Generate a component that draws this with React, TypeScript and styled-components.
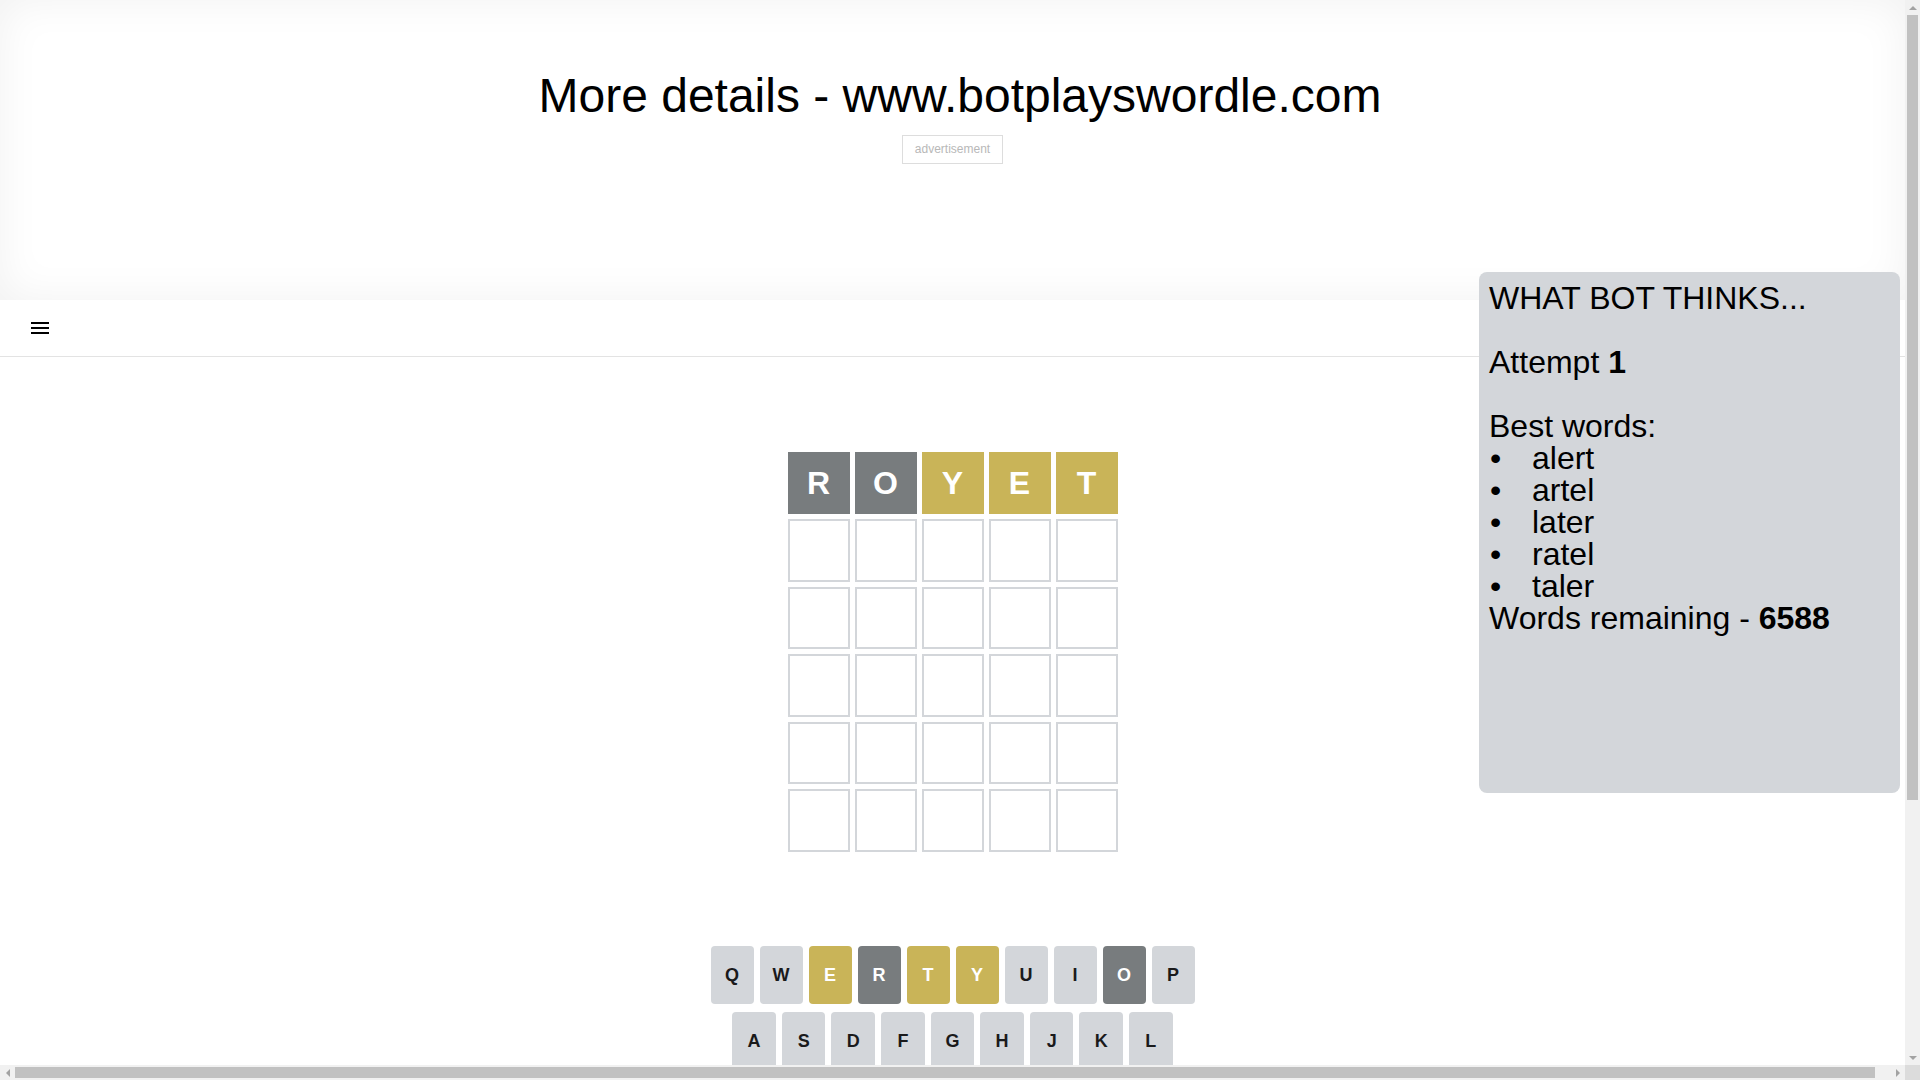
import React from "react";
import styled, { createGlobalStyle, css } from "styled-components";

type TileState = "empty" | "absent" | "present" | "correct";
type KeyState = "idle" | "absent" | "present" | "correct";
type ArrowDir = "up" | "down" | "left" | "right";

const palette = {
  light: "#d3d6da",
  absent: "#787c7e",
  present: "#c9b458",
  correct: "#6aaa64",
};

const GlobalStyle = createGlobalStyle`
  html, body {
    margin: 0;
    padding: 0;
    overflow: hidden;
  }
  body {
    font-family: "Liberation Sans", Arial, sans-serif;
    background: #ffffff;
    color: #000000;
  }
  *, *::before, *::after {
    box-sizing: border-box;
  }
`;

/* ---------- window frame with classic scrollbars ---------- */

const Viewport = styled.div`
  width: 100vw;
  height: 100vh;
  display: grid;
  grid-template-columns: 1fr 15px;
  grid-template-rows: 1fr 15px;
  overflow: hidden;
`;

const Scroller = styled.div`
  position: relative;
  overflow: hidden;
`;

const VTrack = styled.div`
  display: flex;
  flex-direction: column;
  align-items: center;
  background: #f1f1f1;
`;

const HTrack = styled.div`
  display: flex;
  align-items: center;
  background: #f1f1f1;
`;

const Corner = styled.div`
  background: #dcdcdc;
`;

const ArrowBox = styled.div<{ $dir: ArrowDir }>`
  flex: none;
  width: 15px;
  height: 15px;
  display: flex;
  align-items: center;
  justify-content: center;

  &::after {
    content: "";
    width: 0;
    height: 0;
    ${(p) =>
      p.$dir === "up"
        ? css`
            border-left: 4px solid transparent;
            border-right: 4px solid transparent;
            border-bottom: 4px solid #a3a3a3;
          `
        : p.$dir === "down"
        ? css`
            border-left: 4px solid transparent;
            border-right: 4px solid transparent;
            border-top: 4px solid #a3a3a3;
          `
        : p.$dir === "left"
        ? css`
            border-top: 4px solid transparent;
            border-bottom: 4px solid transparent;
            border-right: 4px solid #a3a3a3;
          `
        : css`
            border-top: 4px solid transparent;
            border-bottom: 4px solid transparent;
            border-left: 4px solid #a3a3a3;
          `}
  }
`;

const TrackGap = styled.div`
  flex: 1;
`;

const VThumb = styled.div`
  flex: none;
  width: 11px;
  height: 785px;
  background: #c1c1c1;
`;

const HThumb = styled.div`
  flex: none;
  height: 11px;
  width: 1860px;
  background: #c1c1c1;
`;

/* ---------- page ---------- */

const Page = styled.div`
  position: relative;
`;

const TopSection = styled.header`
  height: 300px;
  padding-top: 68px;
  background: #ffffff;
  box-shadow: inset 0 0 44px rgba(0, 0, 0, 0.06);
`;

const SiteTitle = styled.h1`
  margin: 0;
  width: 100vw;
  text-align: center;
  font-size: 48px;
  font-weight: 400;
  line-height: 55px;
  color: #000;
`;

const AdRow = styled.div`
  display: flex;
  justify-content: center;
  margin-top: 12px;
`;

const AdLabel = styled.span`
  border: 1px solid #dddddd;
  padding: 6px 12px;
  font-size: 12px;
  line-height: 15px;
  color: #b8b8b8;
`;

const NavBar = styled.nav`
  height: 57px;
  display: flex;
  align-items: center;
  padding-left: 28px;
  background: #ffffff;
  border-bottom: 1px solid #e3e3e3;
`;

const MenuButton = styled.button`
  display: flex;
  padding: 0;
  border: 0;
  background: none;
  cursor: pointer;
`;

const BoardArea = styled.main`
  height: 589px;
  display: flex;
  justify-content: center;
  align-items: center;
`;

const Board = styled.div`
  width: 350px;
  height: 420px;
  padding: 10px;
  display: grid;
  grid-template-rows: repeat(6, 1fr);
  gap: 5px;
`;

const BoardRow = styled.div`
  display: grid;
  grid-template-columns: repeat(5, 1fr);
  gap: 5px;
`;

const Tile = styled.div<{ $state: TileState }>`
  display: flex;
  align-items: center;
  justify-content: center;
  font-size: 32px;
  font-weight: 700;
  line-height: 1;
  text-transform: uppercase;
  color: #ffffff;
  background: ${(p) => (p.$state === "empty" ? "#ffffff" : palette[p.$state])};
  border: 2px solid ${(p) => (p.$state === "empty" ? palette.light : palette[p.$state])};
`;

const KeyboardWrap = styled.section`
  width: 100%;
  max-width: 500px;
  height: 200px;
  margin: 0 auto;
  padding: 0 8px;
`;

const KeyRow = styled.div`
  display: flex;
  width: 100%;
  margin: 0 auto 8px;
`;

const Spacer = styled.div`
  flex: 0.5;
`;

const Key = styled.button<{ $state: KeyState; $wide?: boolean }>`
  flex: ${(p) => (p.$wide ? 1.5 : 1)};
  height: 58px;
  margin: 0 6px 0 0;
  padding: 0;
  border: 0;
  border-radius: 4px;
  display: flex;
  align-items: center;
  justify-content: center;
  font-family: "Liberation Sans", Arial, sans-serif;
  font-weight: 700;
  font-size: ${(p) => (p.$wide ? "12px" : "18px")};
  text-transform: uppercase;
  cursor: pointer;
  background: ${(p) => (p.$state === "idle" ? palette.light : palette[p.$state])};
  color: ${(p) => (p.$state === "idle" ? "#1a1a1b" : "#ffffff")};

  &:last-of-type {
    margin: 0;
  }
`;

const BelowFold = styled.div`
  height: 259px;
`;

const BotPanel = styled.aside`
  position: absolute;
  top: 272px;
  right: 5px;
  width: 421px;
  height: 521px;
  padding: 10px;
  background: #d3d6da;
  border-radius: 8px;
  font-size: 32px;
  line-height: 32px;
  color: #000;
`;

const PanelLine = styled.div<{ $gap?: boolean }>`
  margin-bottom: ${(p) => (p.$gap ? "32px" : "0")};
`;

const WordList = styled.ul`
  list-style: none;
  margin: 0;
  padding: 0;
`;

const WordItem = styled.li`
  &::before {
    content: "•";
    display: inline-block;
    width: 43px;
    padding-left: 1px;
  }
`;

const MenuIcon = () => (
  <svg width="24" height="24" viewBox="0 0 24 24" aria-hidden="true">
    <path d="M3 18h18v-2H3v2zm0-5h18v-2H3v2zm0-7v2h18V6H3z" fill="#000" />
  </svg>
);

const BackspaceIcon = () => (
  <svg width="24" height="24" viewBox="0 0 24 24" aria-hidden="true">
    <path
      fill="#1a1a1b"
      d="M22 3H7c-.69 0-1.23.35-1.59.88L0 12l5.41 8.11c.36.53.9.89 1.59.89h15c1.1 0 2-.9 2-2V5c0-1.1-.9-2-2-2zm0 16H7.07L2.4 12l4.66-7H22v14zm-11.59-2L14 13.41 17.59 17 19 15.59 15.41 12 19 8.41 17.59 7 14 10.59 10.41 7 9 8.41 12.59 12 9 15.59z"
    />
  </svg>
);

const guesses: { letter: string; state: TileState }[][] = [
  [
    { letter: "r", state: "absent" },
    { letter: "o", state: "absent" },
    { letter: "y", state: "present" },
    { letter: "e", state: "present" },
    { letter: "t", state: "present" },
  ],
];

const rows = Array.from({ length: 6 }, (_, r) =>
  guesses[r] ?? Array.from({ length: 5 }, () => ({ letter: "", state: "empty" as TileState }))
);

const keyStates: Record<string, KeyState> = {
  e: "present",
  t: "present",
  y: "present",
  r: "absent",
  o: "absent",
};

const keyRows = ["qwertyuiop", "asdfghjkl", "zxcvbnm"];

const bestWords = ["alert", "artel", "later", "ratel", "taler"];

export default function App() {
  const renderKey = (k: string) => (
    <Key key={k} $state={keyStates[k] ?? "idle"}>
      {k}
    </Key>
  );

  return (
    <Viewport>
      <GlobalStyle />
      <Scroller>
        <Page>
          <TopSection>
            <SiteTitle>More details - www.botplayswordle.com</SiteTitle>
            <AdRow>
              <AdLabel>advertisement</AdLabel>
            </AdRow>
          </TopSection>

          <NavBar>
            <MenuButton aria-label="menu">
              <MenuIcon />
            </MenuButton>
          </NavBar>

          <BoardArea>
            <Board>
              {rows.map((row, r) => (
                <BoardRow key={r}>
                  {row.map((t, c) => (
                    <Tile key={c} $state={t.state}>
                      {t.letter}
                    </Tile>
                  ))}
                </BoardRow>
              ))}
            </Board>
          </BoardArea>

          <KeyboardWrap>
            <KeyRow>{keyRows[0].split("").map(renderKey)}</KeyRow>
            <KeyRow>
              <Spacer />
              {keyRows[1].split("").map(renderKey)}
              <Spacer />
            </KeyRow>
            <KeyRow>
              <Key $state="idle" $wide>
                enter
              </Key>
              {keyRows[2].split("").map(renderKey)}
              <Key $state="idle" $wide aria-label="backspace">
                <BackspaceIcon />
              </Key>
            </KeyRow>
          </KeyboardWrap>

          <BelowFold />

          <BotPanel>
            <PanelLine $gap>WHAT BOT THINKS...</PanelLine>
            <PanelLine $gap>
              Attempt <b>1</b>
            </PanelLine>
            <PanelLine>Best words:</PanelLine>
            <WordList>
              {bestWords.map((w) => (
                <WordItem key={w}>{w}</WordItem>
              ))}
            </WordList>
            <PanelLine>
              Words remaining - <b>6588</b>
            </PanelLine>
          </BotPanel>
        </Page>
      </Scroller>

      <VTrack>
        <ArrowBox $dir="up" />
        <VThumb />
        <TrackGap />
        <ArrowBox $dir="down" />
      </VTrack>

      <HTrack>
        <ArrowBox $dir="left" />
        <HThumb />
        <TrackGap />
        <ArrowBox $dir="right" />
      </HTrack>
      <Corner />
    </Viewport>
  );
}
